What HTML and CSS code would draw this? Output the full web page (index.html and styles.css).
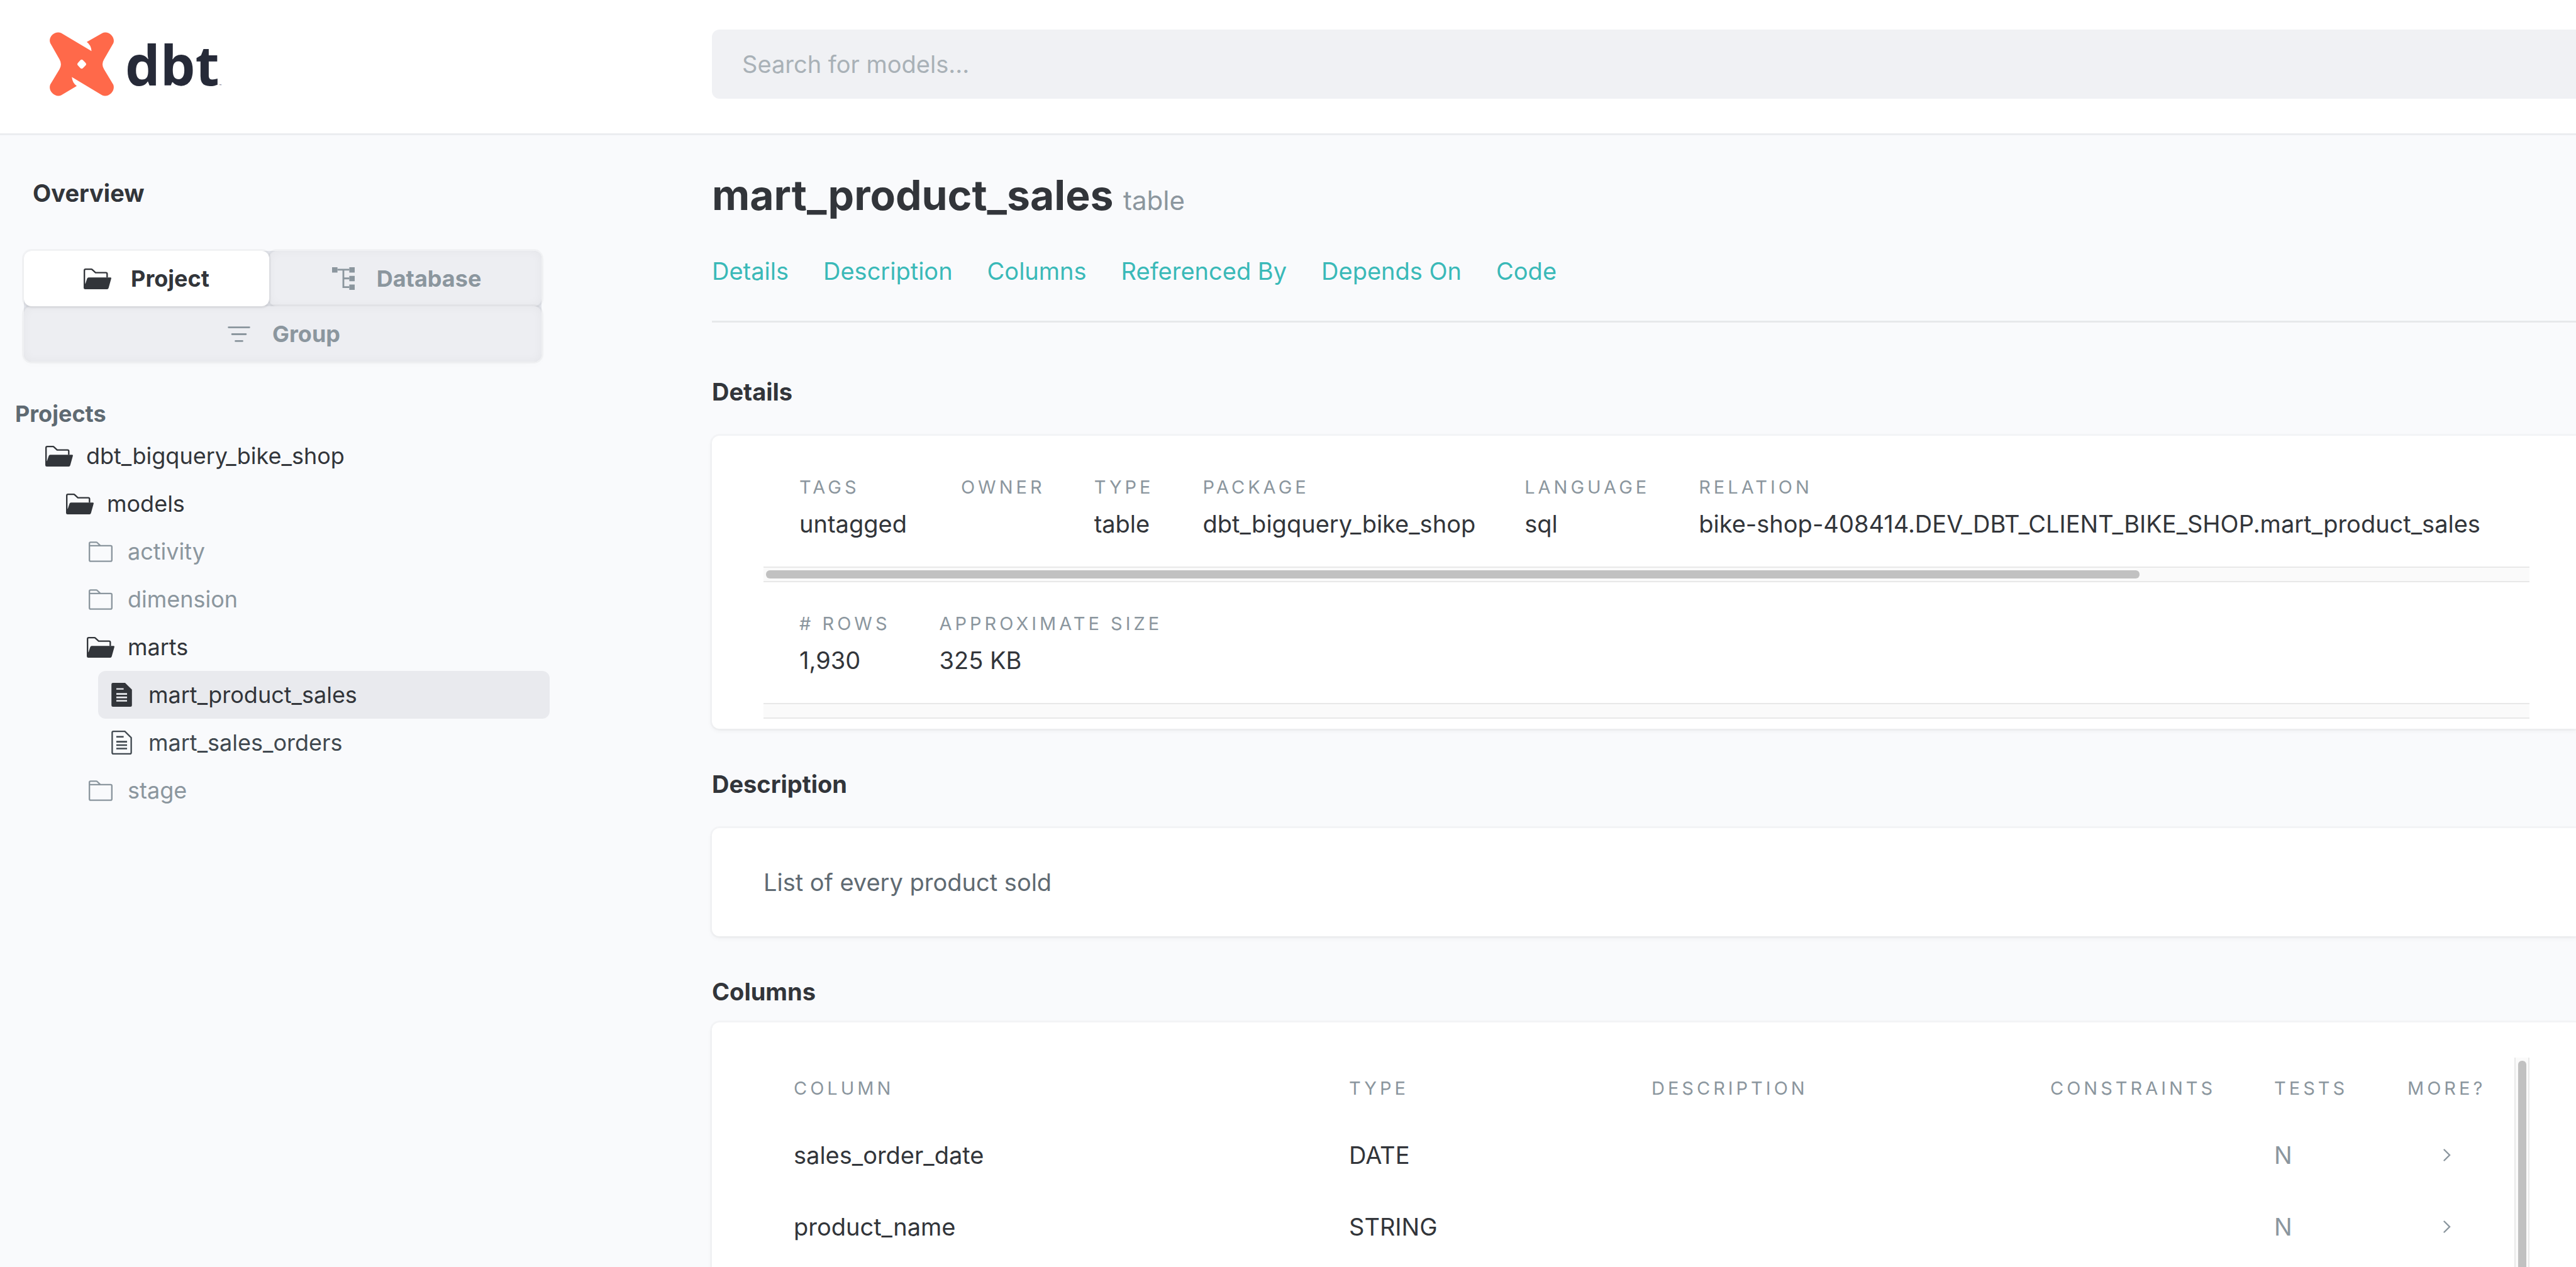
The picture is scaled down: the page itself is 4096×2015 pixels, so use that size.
FILE: index.html
```html
<!DOCTYPE html>
<html lang="en">
<head>
<meta charset="utf-8">
<title>mart_product_sales - dbt Docs</title>
<link rel="stylesheet" href="styles.css">
</head>
<body>
<svg class="sprite" aria-hidden="true">
  <symbol id="folder-open" viewBox="0 0 56 42">
    <path d="M1.5 39V4q0-2.500 2.500-2.500H15.500q1.200 0 2 .8L24 8.500H45q2.500 0 2.500 2.500V18" fill="none" stroke="currentColor" stroke-width="3"/>
    <path d="M10 18H54q2.500 0 1.800 2.500L50.500 39.500q-.8 2.500-3 2.500H3q-3 0-3-3V30L3.500 31 7 20.500Q7.800 18 10 18Z" fill="currentColor"/>
  </symbol>
  <symbol id="folder" viewBox="0 0 49 42">
    <path d="M1.500 8.500H45q2.500 0 2.500 2.500V38q0 2.500-2.500 2.500H4q-2.500 0-2.500-2.500V4q0-2.500 2.500-2.500H15.500q1.200 0 2 .8L24 8.500" fill="none" stroke="currentColor" stroke-width="3"/>
  </symbol>
  <symbol id="file-fill" viewBox="0 0 42 49">
    <path fill-rule="evenodd" fill="currentColor" d="M3 0H28L42 14V46q0 3-3 3H3q-3 0-3-3V3Q0 0 3 0ZM10 11V14H25V11ZM10 21V24.500H32V21ZM10 28V31.500H32V28ZM10 35V38.500H32V35Z"/>
  </symbol>
  <symbol id="file" viewBox="0 0 42 49">
    <path d="M4 1.500H27.500L40.500 14.500V45q0 2.500-2.500 2.500H4q-2.500 0-2.500-2.500V4Q1.500 1.500 4 1.500Z" fill="none" stroke="currentColor" stroke-width="3"/>
    <path d="M10 12.500H25M10 22.700H32M10 29.700H32M10 36.700H32" stroke="currentColor" stroke-width="3.400"/>
  </symbol>
  <symbol id="tree" viewBox="0 0 46 46">
    <path d="M0 0H11V11H0ZM35 0H46V11H35ZM35 17.500H46V28.500H35ZM35 35H46V46H35Z" fill="currentColor"/>
    <path d="M11 5H35M23 5V40.500H35M23 22.700H35" fill="none" stroke="currentColor" stroke-width="3.600"/>
  </symbol>
  <symbol id="filter" viewBox="0 0 46 32">
    <path d="M2 2H44M9 16H37M16 30H30" stroke="currentColor" stroke-width="3.600" stroke-linecap="round"/>
  </symbol>
  <symbol id="chevron" viewBox="0 0 12 20">
    <path d="M1.500 1.500 10 10 1.500 18.500" fill="none" stroke="currentColor" stroke-width="2.400" stroke-linecap="round"/>
  </symbol>
</svg>

<header class="topbar">
  <a class="logo" href="#">
    <svg class="logo-mark" viewBox="0 0 391 390" aria-hidden="true">
      <path fill="#ff694a" fill-rule="evenodd" d="M70 5 255 115Q252 78 226 60L322 5C356-12 403 28 388 68L331 166Q313 195 331 226L388 321C402 362 356 402 320 385L135 274Q139 312 165 328L70 385C34 402-13 358 4 319L60 226Q77 195 60 166L4 68C-13 28 34-12 70 5ZM186 172 173 186Q164 195 173 204L186 218Q195 227 204 218L218 204Q227 195 218 186L204 172Q195 163 186 172Z"/>
    </svg>
    <span class="logo-text">dbt</span><span class="logo-tm">™</span>
  </a>
  <input class="search" type="search" placeholder="Search for models..." aria-label="Search for models">
</header>

<div class="layout">
  <nav class="sidebar" aria-label="Navigation">
    <a class="overview" href="#">Overview</a>
    <div class="switch">
      <button class="tab tab-active" type="button"><span class="node-icon"><svg class="ic-folder-open"><use href="#folder-open"/></svg></span>Project</button>
      <button class="tab" type="button"><span class="node-icon"><svg class="ic-tree"><use href="#tree"/></svg></span>Database</button>
      <button class="tab tab-wide" type="button"><span class="node-icon"><svg class="ic-filter"><use href="#filter"/></svg></span>Group</button>
    </div>
    <h2 class="tree-title">Projects</h2>
    <ul class="tree">
      <li><a class="node node-open" href="#"><span class="node-icon"><svg class="ic-folder-open"><use href="#folder-open"/></svg></span>dbt_bigquery_bike_shop</a>
        <ul>
          <li><a class="node node-open" href="#"><span class="node-icon"><svg class="ic-folder-open"><use href="#folder-open"/></svg></span>models</a>
            <ul>
              <li><a class="node" href="#"><span class="node-icon"><svg class="ic-folder"><use href="#folder"/></svg></span>activity</a></li>
              <li><a class="node" href="#"><span class="node-icon"><svg class="ic-folder"><use href="#folder"/></svg></span>dimension</a></li>
              <li><a class="node node-open" href="#"><span class="node-icon"><svg class="ic-folder-open"><use href="#folder-open"/></svg></span>marts</a>
                <ul>
                  <li><a class="node node-open node-active" href="#"><span class="node-icon"><svg class="ic-file"><use href="#file-fill"/></svg></span>mart_product_sales</a></li>
                  <li><a class="node node-file" href="#"><span class="node-icon"><svg class="ic-file"><use href="#file"/></svg></span>mart_sales_orders</a></li>
                </ul>
              </li>
              <li><a class="node" href="#"><span class="node-icon"><svg class="ic-folder"><use href="#folder"/></svg></span>stage</a></li>
            </ul>
          </li>
        </ul>
      </li>
    </ul>
  </nav>

  <main class="content">
    <h1 class="title">mart_product_sales <small>table</small></h1>
    <nav class="links" aria-label="Sections">
      <a href="#details">Details</a>
      <a href="#description">Description</a>
      <a href="#columns">Columns</a>
      <a href="#referenced">Referenced By</a>
      <a href="#depends">Depends On</a>
      <a href="#code">Code</a>
    </nav>

    <section id="details">
      <h2 class="heading">Details</h2>
      <div class="card card-details">
        <dl class="facts">
          <div class="fact fact-tags"><dt>tags</dt><dd>untagged</dd></div>
          <div class="fact"><dt>owner</dt><dd></dd></div>
          <div class="fact"><dt>type</dt><dd>table</dd></div>
          <div class="fact"><dt>package</dt><dd>dbt_bigquery_bike_shop</dd></div>
          <div class="fact"><dt>language</dt><dd>sql</dd></div>
          <div class="fact"><dt>relation</dt><dd>bike-shop-408414.DEV_DBT_CLIENT_BIKE_SHOP.mart_product_sales</dd></div>
        </dl>
        <div class="track-x"><div class="thumb-x"></div></div>
        <dl class="facts">
          <div class="fact"><dt># rows</dt><dd>1,930</dd></div>
          <div class="fact"><dt>approximate size</dt><dd>325 KB</dd></div>
        </dl>
        <div class="track-x"></div>
      </div>
    </section>

    <section id="description">
      <h2 class="heading">Description</h2>
      <div class="card card-text"><p>List of every product sold</p></div>
    </section>

    <section id="columns" class="columns">
      <h2 class="heading">Columns</h2>
      <div class="card card-columns">
        <table class="grid">
          <thead>
            <tr><th class="col-name">Column</th><th class="col-type">Type</th><th class="col-desc">Description</th><th class="col-cons">Constraints</th><th class="col-tests">Tests</th><th class="col-more">More?</th></tr>
          </thead>
          <tbody>
            <tr><td>sales_order_date</td><td>DATE</td><td></td><td></td><td class="muted">N</td><td class="muted more"><svg class="ic-chevron"><use href="#chevron"/></svg></td></tr>
            <tr><td>product_name</td><td>STRING</td><td></td><td></td><td class="muted">N</td><td class="muted more"><svg class="ic-chevron"><use href="#chevron"/></svg></td></tr>
          </tbody>
        </table>
        <div class="track-y"><div class="thumb-y"></div></div>
      </div>
    </section>
  </main>
</div>
</body>
</html>
```
FILE: styles.css
```css
* { box-sizing: border-box; }

body {
  margin: 0;
  height: 100vh;
  overflow: hidden;
  display: flex;
  flex-direction: column;
  background: #f9fafc;
  color: #32353a;
  font: 38px/48px Inter, "Liberation Sans", sans-serif;
}

h1, h2, p, dl, dd, ul { margin: 0; padding: 0; }
ul { list-style: none; }
a { color: inherit; text-decoration: none; }
svg { display: block; flex: none; }
.sprite { position: absolute; width: 0; height: 0; }

.ic-folder-open { width: 44px; height: 33px; }
.ic-folder { width: 38px; height: 33px; }
.ic-file { width: 33px; height: 38px; }
.ic-tree { width: 36px; height: 36px; }
.ic-filter { width: 36px; height: 25px; }
.ic-chevron { width: 12px; height: 20px; }

/* Top bar */
.topbar {
  display: grid;
  grid-template-columns: 1132px 1fr;
  align-items: center;
  flex: none;
  height: 215px;
  padding-bottom: 8px;
  background: #fff;
  border-bottom: 3px solid #ebedf0;
}
.logo {
  display: flex;
  align-items: center;
  padding-left: 79px;
}
.logo-mark { width: 102px; height: 102px; }
.logo-text {
  margin-left: 18px;
  font: 700 88px/102px "Open Sans", sans-serif;
  color: #262a38;
}
.logo-tm {
  align-self: flex-end;
  font-size: 6px;
  line-height: 32px;
  color: #262a38;
}
.search {
  width: 100%;
  height: 110px;
  padding: 0 48px;
  border: 0;
  border-radius: 12px 0 0 12px;
  background: #f0f1f4;
  color: #32353a;
  font: inherit;
  outline: 0;
}
.search::placeholder { color: #a9b1b7; opacity: 1; }

.layout {
  display: grid;
  grid-template-columns: 1132px 1fr;
  flex: 1;
  min-height: 0;
}

/* Sidebar */
.sidebar { padding: 68px 258px 0 24px; }
.overview {
  display: block;
  margin-left: 28px;
  font-weight: 700;
}
.switch {
  display: grid;
  grid-template-columns: 390px 1fr;
  grid-auto-rows: 88px;
  margin: 68px 13px 0 14px;
  background: #e3e5eb;
  border-radius: 12px;
}
.tab {
  display: flex;
  align-items: center;
  justify-content: center;
  gap: 31px;
  padding: 0;
  border: 0;
  border-radius: 12px;
  background: #edeef2;
  box-shadow: 0 0 0 3px rgba(0, 0, 0, .03), 0 4px 12px rgba(0, 0, 0, .02), inset 0 0 16px rgba(0, 0, 0, .04);
  color: #8b969e;
  font: 700 36px/48px Inter, "Liberation Sans", sans-serif;
}
.tab-active {
  background: #fff;
  box-shadow: 0 0 0 3px rgba(0, 0, 0, .03), 0 3px 4px rgba(0, 0, 0, .04);
  color: #32353a;
  z-index: 1;
}
.tab-wide { grid-column: 1 / -1; }
.tree-title {
  margin-top: 59px;
  font-size: 36px;
  line-height: 48px;
  font-weight: 700;
  color: #5f6a72;
}
.tree { margin: 5px 0 0 33px; }
.tree ul { margin-left: 33px; }
.node {
  display: flex;
  align-items: center;
  gap: 21px;
  height: 76px;
  padding-left: 15px;
  border-radius: 12px;
  color: #8b969e;
  font-size: 36px;
}
.node-icon {
  display: flex;
  justify-content: center;
  width: 44px;
}
.node-open { color: #32353a; }
.node-file { color: #414950; }
.node-active { background: #e9eaee; }

/* Content */
.content {
  display: flex;
  flex-direction: column;
  min-width: 0;
  padding-top: 55px;
}
.title {
  font-size: 66px;
  line-height: 80px;
  font-weight: 700;
}
.title small {
  font-size: 42px;
  line-height: 48px;
  font-weight: 400;
  color: #8b969e;
}
.links {
  display: flex;
  gap: 55px;
  margin-top: 57px;
  padding-bottom: 55px;
  border-bottom: 3px solid #e7e9eb;
  margin-bottom: 22px;
  color: #3ab9b8;
}
.heading {
  margin: 64px 0 46px;
  font-size: 38px;
  line-height: 48px;
  font-weight: 700;
}
.card {
  background: #fff;
  border-radius: 12px 0 0 12px;
  box-shadow: 0 0 0 3px rgba(0, 0, 0, .02), 0 3px 8px rgba(0, 0, 0, .05);
}
.card-details { padding: 62px 74px 16px 82px; }
.facts {
  display: flex;
  gap: 78px;
  padding: 0 57px 44px;
  white-space: nowrap;
}
.fact dt {
  font-size: 29px;
  line-height: 40px;
  letter-spacing: 5px;
  text-transform: uppercase;
  color: #8b969e;
}
.fact dd {
  height: 48px;
  margin-top: 14px;
}
.fact-tags { padding-right: 8px; }
.track-x {
  height: 25px;
  padding: 4px;
  background: #fafafa;
  border: solid #e8e8e8;
  border-width: 2px 0;
}
.thumb-x {
  width: 78%;
  height: 13px;
  border-radius: 6px;
  background: #c1c1c1;
}
.track-x + .facts { padding-top: 46px; }
.card-text {
  padding: 62px 82px;
  color: #5f6a72;
}

/* Columns table */
.columns {
  display: flex;
  flex-direction: column;
  flex: 1;
  min-height: 0;
}
.columns .heading { margin-bottom: 25px; }
.card-columns {
  display: flex;
  flex: 1;
  min-height: 0;
  padding: 56px 74px 0 82px;
  border-radius: 12px 0 0 0;
}
.grid {
  flex: 1;
  table-layout: fixed;
  border-collapse: collapse;
  align-self: flex-start;
}
.grid th, .grid td {
  padding: 0 0 0 48px;
  text-align: left;
  height: 114px;
}
.grid th {
  height: 98px;
  font-size: 29px;
  font-weight: 400;
  letter-spacing: 5px;
  text-transform: uppercase;
  color: #8b969e;
}
.grid .muted { color: #8b969e; }
.grid .more { padding-left: 105px; }
.col-name { width: 883px; }
.col-type { width: 481px; }
.col-desc { width: 634px; }
.col-cons { width: 356px; }
.col-tests { width: 212px; }
.track-y {
  width: 24px;
  padding: 5px 3px 0 4px;
  background: #fafafa;
  border: solid #e8e8e8;
  border-width: 0 2px;
}
.thumb-y {
  height: 100%;
  border-radius: 6px 6px 0 0;
  background: #c1c1c1;
}
```
